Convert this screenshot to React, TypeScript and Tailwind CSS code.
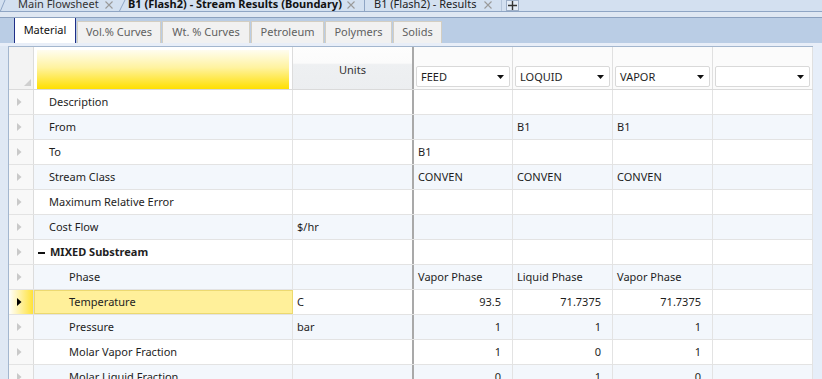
import React from "react";

type Row = {
  name: string;
  indent?: number;
  bold?: boolean;
  minus?: boolean;
  units?: string;
  vals?: string[];
  right?: boolean;
  selected?: boolean;
};

const rows: Row[] = [
  { name: "Description", indent: 1 },
  { name: "From", indent: 1, vals: ["", "B1", "B1"] },
  { name: "To", indent: 1, vals: ["B1", "", ""] },
  { name: "Stream Class", indent: 1, vals: ["CONVEN", "CONVEN", "CONVEN"] },
  { name: "Maximum Relative Error", indent: 1 },
  { name: "Cost Flow", indent: 1, units: "$/hr" },
  { name: "MIXED Substream", indent: 1, bold: true, minus: true },
  { name: "Phase", indent: 2, vals: ["Vapor Phase", "Liquid Phase", "Vapor Phase"] },
  { name: "Temperature", indent: 2, units: "C", vals: ["93.5", "71.7375", "71.7375"], right: true, selected: true },
  { name: "Pressure", indent: 2, units: "bar", vals: ["1", "1", "1"], right: true },
  { name: "Molar Vapor Fraction", indent: 2, vals: ["1", "0", "1"], right: true },
  { name: "Molar Liquid Fraction", indent: 2, vals: ["0", "1", "0"], right: true },
];

function Arrow({ dark }: { dark?: boolean }) {
  return (
    <svg width="5" height="8" viewBox="0 0 5 8">
      <polygon points="0,0 4.5,4 0,8" fill={dark ? "#000000" : "#c9c9c9"} />
    </svg>
  );
}

function Close() {
  return (
    <svg width="8" height="8" viewBox="0 0 8 8" className="shrink-0">
      <path d="M0.5 0.5 L7.5 7.5 M7.5 0.5 L0.5 7.5" stroke="#9a9a9a" strokeWidth="1.1" />
    </svg>
  );
}

function Dropdown({ label }: { label: string }) {
  return (
    <div className="h-[21px] w-full bg-white border border-[#d9d9d9] rounded-[2px] flex items-center pl-[4px] pr-[5px] text-[#1e1e1e]">
      <span className="flex-1 leading-none whitespace-nowrap">{label}</span>
      <svg width="7" height="4" viewBox="0 0 7 4">
        <polygon points="0,0 7,0 3.5,4" fill="#111111" />
      </svg>
    </div>
  );
}

const dataW = ["w-[99px]", "w-[100px]", "w-[100px]", "w-[100px]"];

export default function App() {
  return (
    <div className="w-[822px] h-[379px] overflow-hidden bg-[#dfe8f4] font-['Noto_Sans',sans-serif] text-[#1e1e1e] text-[11px] whitespace-nowrap">
      {/* document tabs */}
      <div className="h-[12px] bg-[#d3e0f0] border-b border-[#8fa5c4] flex items-start overflow-hidden">
        <svg width="6" height="12" className="shrink-0" viewBox="0 0 6 12">
          <path d="M0 12 L5 0" stroke="#8fa5c4" strokeWidth="1" />
        </svg>
        <div className="flex items-start gap-[6px] pl-[12px] w-[112px] shrink-0 h-[12px]">
          <span className="leading-[12px] mt-[-2px] text-[#333]">Main Flowsheet</span>
          <span className="mt-[1px]"><Close /></span>
        </div>
        <svg width="8" height="12" className="shrink-0" viewBox="0 0 8 12">
          <path d="M1 12 L7 0" stroke="#8fa5c4" strokeWidth="1" />
        </svg>
        <div className="flex items-start gap-[5px] pl-[2px] w-[238px] shrink-0 h-[12px]">
          <span className="leading-[12px] mt-[-2px] font-bold text-[#111]">B1 (Flash2) - Stream Results (Boundary)</span>
          <span className="mt-[1px]"><Close /></span>
        </div>
        <div className="w-px h-[12px] bg-[#8fa5c4] shrink-0" />
        <div className="flex items-start gap-[8px] pl-[9px] w-[136px] shrink-0 h-[12px]">
          <span className="leading-[12px] mt-[-2px] text-[#222]">B1 (Flash2) - Results</span>
          <span className="mt-[1px]"><Close /></span>
        </div>
        <div className="w-px h-[12px] bg-[#b5c5da] shrink-0" />
        <div className="ml-[4px] w-[13px] h-[11px] border border-[#9fb0c8] bg-[#e4ecf6] flex items-center justify-center shrink-0">
          <svg width="9" height="9" viewBox="0 0 9 9">
            <path d="M4.5 0 V9 M0 4.5 H9" stroke="#333" strokeWidth="1.4" />
          </svg>
        </div>
      </div>
      <div className="h-[6px] bg-[#dfe7f2] border-b border-[#8ba0be]" />
      {/* inner tabs */}
      <div className="h-[25px] bg-[#bacde5] flex items-end pl-[14px] text-[12px]">
        <div className="w-[62px] h-[25px] bg-white border-x border-[#1f2f88] flex items-center justify-center text-[#111] text-[11px]">
          Material
        </div>
        <div className="ml-[1px] w-[84px] h-[22px] bg-[#f1f1f1] border border-b-0 border-[#d3cec2] flex items-center justify-center text-[#606060] text-[11px]">
          Vol.% Curves
        </div>
        <div className="ml-[1px] w-[88px] h-[22px] bg-[#f1f1f1] border border-b-0 border-[#d3cec2] flex items-center justify-center text-[#606060] text-[11px]">
          Wt. % Curves
        </div>
        <div className="ml-[1px] w-[73px] h-[22px] bg-[#f1f1f1] border border-b-0 border-[#d3cec2] flex items-center justify-center text-[#606060] text-[11px]">
          Petroleum
        </div>
        <div className="ml-[1px] w-[67px] h-[22px] bg-[#f1f1f1] border border-b-0 border-[#d3cec2] flex items-center justify-center text-[#606060] text-[11px]">
          Polymers
        </div>
        <div className="ml-[1px] w-[49px] h-[22px] bg-[#f1f1f1] border border-b-0 border-[#d3cec2] flex items-center justify-center text-[#606060] text-[11px]">
          Solids
        </div>
      </div>
      <div className="h-[3px] bg-[#e8eef8]" />
      {/* grid */}
      <div className="flex">
        <div className="ml-[8px] border-l border-t border-[#a3b6ce] bg-white">
          {/* header row */}
          <div className="flex h-[43px] border-b border-[#dadada]">
            <div className="w-[25px] border-r border-[#dcdcdc] bg-[#f3f3f3] flex items-end justify-end pr-[2px] pb-[3px]">
              <svg width="7" height="7" viewBox="0 0 7 7">
                <polygon points="7,0 7,7 0,7" fill="#cfcfcf" />
              </svg>
            </div>
            <div className="w-[259px] border-r border-[#dcdcdc] bg-white pt-[3px] px-[3px]">
              <div className="h-full bg-[linear-gradient(to_bottom,#fffdf0,#fff3a0_45%,#ffdf00)]" />
            </div>
            <div className="w-[121px] border-r-2 border-[#a9a9a9] bg-[linear-gradient(to_bottom,#fdfdfd_0%,#fbfbfb_38%,#eef0f2_42%,#eceef0_100%)] flex items-center justify-center pt-[4px] text-[#333]">
              Units
            </div>
            {["FEED", "LOQUID", "VAPOR", ""].map((l, i) => (
              <div key={i} className={`${dataW[i]} border-r border-[#e0e0e0] bg-[#fbfbfb] flex items-end px-[2px] pb-[2px]`}>
                <Dropdown label={l} />
              </div>
            ))}
          </div>
          {rows.map((r, idx) => {
            const alt = idx % 2 === 1;
            const bg = alt ? "bg-[#f3f7fc]" : "bg-white";
            return (
              <div key={idx} className={`flex h-[25px] border-b border-[#e3e3e3] ${bg}`}>
                <div
                  className={`w-[25px] border-r border-[#dcdcdc] flex items-center pl-[8px] ${
                    r.selected ? "bg-[linear-gradient(to_right,#ffffff,#ffe23a)]" : "bg-[#f8f8f8]"
                  }`}
                >
                  <Arrow dark={r.selected} />
                </div>
                <div
                  className={`w-[259px] border-r flex items-center pt-[1px] ${
                    r.selected ? "bg-[#fff09a] border-[#e6d36a] outline outline-1 outline-[#ecd970] -outline-offset-1" : "border-[#e3e3e3]"
                  } ${r.indent === 2 ? "pl-[35px]" : r.minus ? "pl-[4px]" : "pl-[15px]"} ${r.bold ? "font-bold" : ""}`}
                >
                  {r.minus && (
                    <span className="inline-block w-[7px] h-[2px] bg-[#111] mr-[5px]" />
                  )}
                  {r.name}
                </div>
                <div className={`w-[121px] border-r-2 border-[#a9a9a9] flex items-center pt-[1px] pl-[4px] ${r.selected ? "bg-white" : ""}`}>
                  {r.units ?? ""}
                </div>
                {[0, 1, 2, 3].map((i) => (
                  <div
                    key={i}
                    className={`${dataW[i]} border-r border-[#e3e3e3] flex items-center pt-[1px] ${
                      r.right ? "justify-end pr-[11px]" : "pl-[4px]"
                    } ${r.selected ? "bg-white" : ""}`}
                  >
                    {r.vals?.[i] ?? ""}
                  </div>
                ))}
              </div>
            );
          })}
        </div>
        <div className="flex-1 bg-[#e6eef9]" />
      </div>
    </div>
  );
}
